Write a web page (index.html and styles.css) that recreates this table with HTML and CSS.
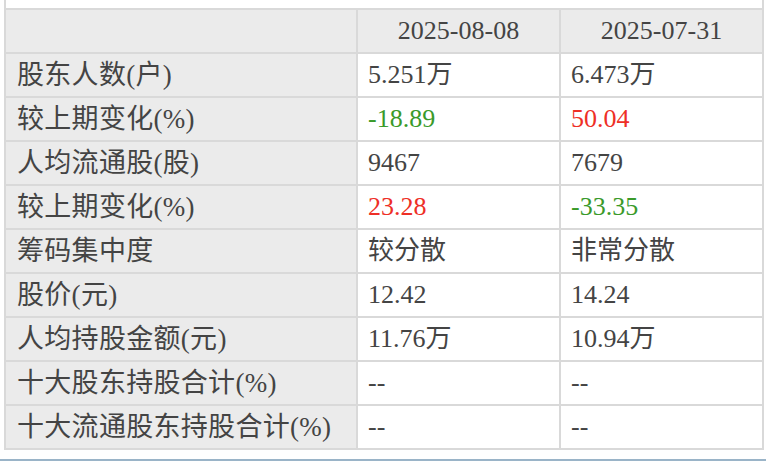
FILE: index.html
```html
<!DOCTYPE html>
<html lang="zh-CN">
<head>
<meta charset="utf-8">
<title>股东人数</title>
<link rel="stylesheet" href="styles.css">
</head>
<body>
<div class="page">
  <div class="prev"></div>
  <table class="holders">
    <thead>
      <tr><th class="label"></th><th>2025-08-08</th><th>2025-07-31</th></tr>
    </thead>
    <tbody>
      <tr><td class="label">股东人数(户)</td><td>5.251万</td><td>6.473万</td></tr>
      <tr><td class="label">较上期变化(%)</td><td class="down">-18.89</td><td class="up">50.04</td></tr>
      <tr><td class="label">人均流通股(股)</td><td>9467</td><td>7679</td></tr>
      <tr><td class="label">较上期变化(%)</td><td class="up">23.28</td><td class="down">-33.35</td></tr>
      <tr><td class="label">筹码集中度</td><td>较分散</td><td>非常分散</td></tr>
      <tr><td class="label">股价(元)</td><td>12.42</td><td>14.24</td></tr>
      <tr><td class="label">人均持股金额(元)</td><td>11.76万</td><td>10.94万</td></tr>
      <tr><td class="label">十大股东持股合计(%)</td><td>--</td><td>--</td></tr>
      <tr><td class="label">十大流通股东持股合计(%)</td><td>--</td><td>--</td></tr>
    </tbody>
  </table>
  <div class="rule"></div>
</div>
</body>
</html>
```
FILE: styles.css
```css
html, body {
  margin: 0;
  padding: 0;
  background: #ffffff;
}
body {
  font-family: "Liberation Serif", "Noto Sans CJK SC", serif;
  color: #444444;
}
.page {
  width: 766px;
  height: 468px;
  overflow: hidden;
}
.prev {
  margin-left: 4px;
  width: 756px;
  height: 8px;
  border-left: 2px solid #d9d9d9;
  border-right: 2px solid #d9d9d9;
}
.holders {
  margin-left: 4px;
  border-collapse: collapse;
  table-layout: fixed;
  width: 760px;
  border: 2px solid #d9d9d9;
}
.holders th,
.holders td {
  border: 2px solid #d9d9d9;
  height: 42px;
  padding: 0 0 0 10px;
  font-size: 26px;
  font-weight: normal;
  line-height: 42px;
  text-align: left;
  white-space: nowrap;
  background: #ffffff;
  box-sizing: border-box;
}
.holders th {
  background: #ebebeb;
  text-align: center;
  padding: 0;
}
.holders .label {
  width: 352px;
  background: #ebebeb;
  padding: 1px 0 0 11px;
  line-height: 41px;
  font-size: 27px;
  letter-spacing: 0.3px;
}
.holders th:nth-child(2),
.holders th:nth-child(3) {
  width: 203px;
}
.holders td.up { color: #ee2f26; }
.holders td.down { color: #3a9a2a; }
.rule {
  margin-top: 9px;
  margin-left: 0;
  width: 766px;
  height: 2px;
  background: #9ab4c8;
}
```
